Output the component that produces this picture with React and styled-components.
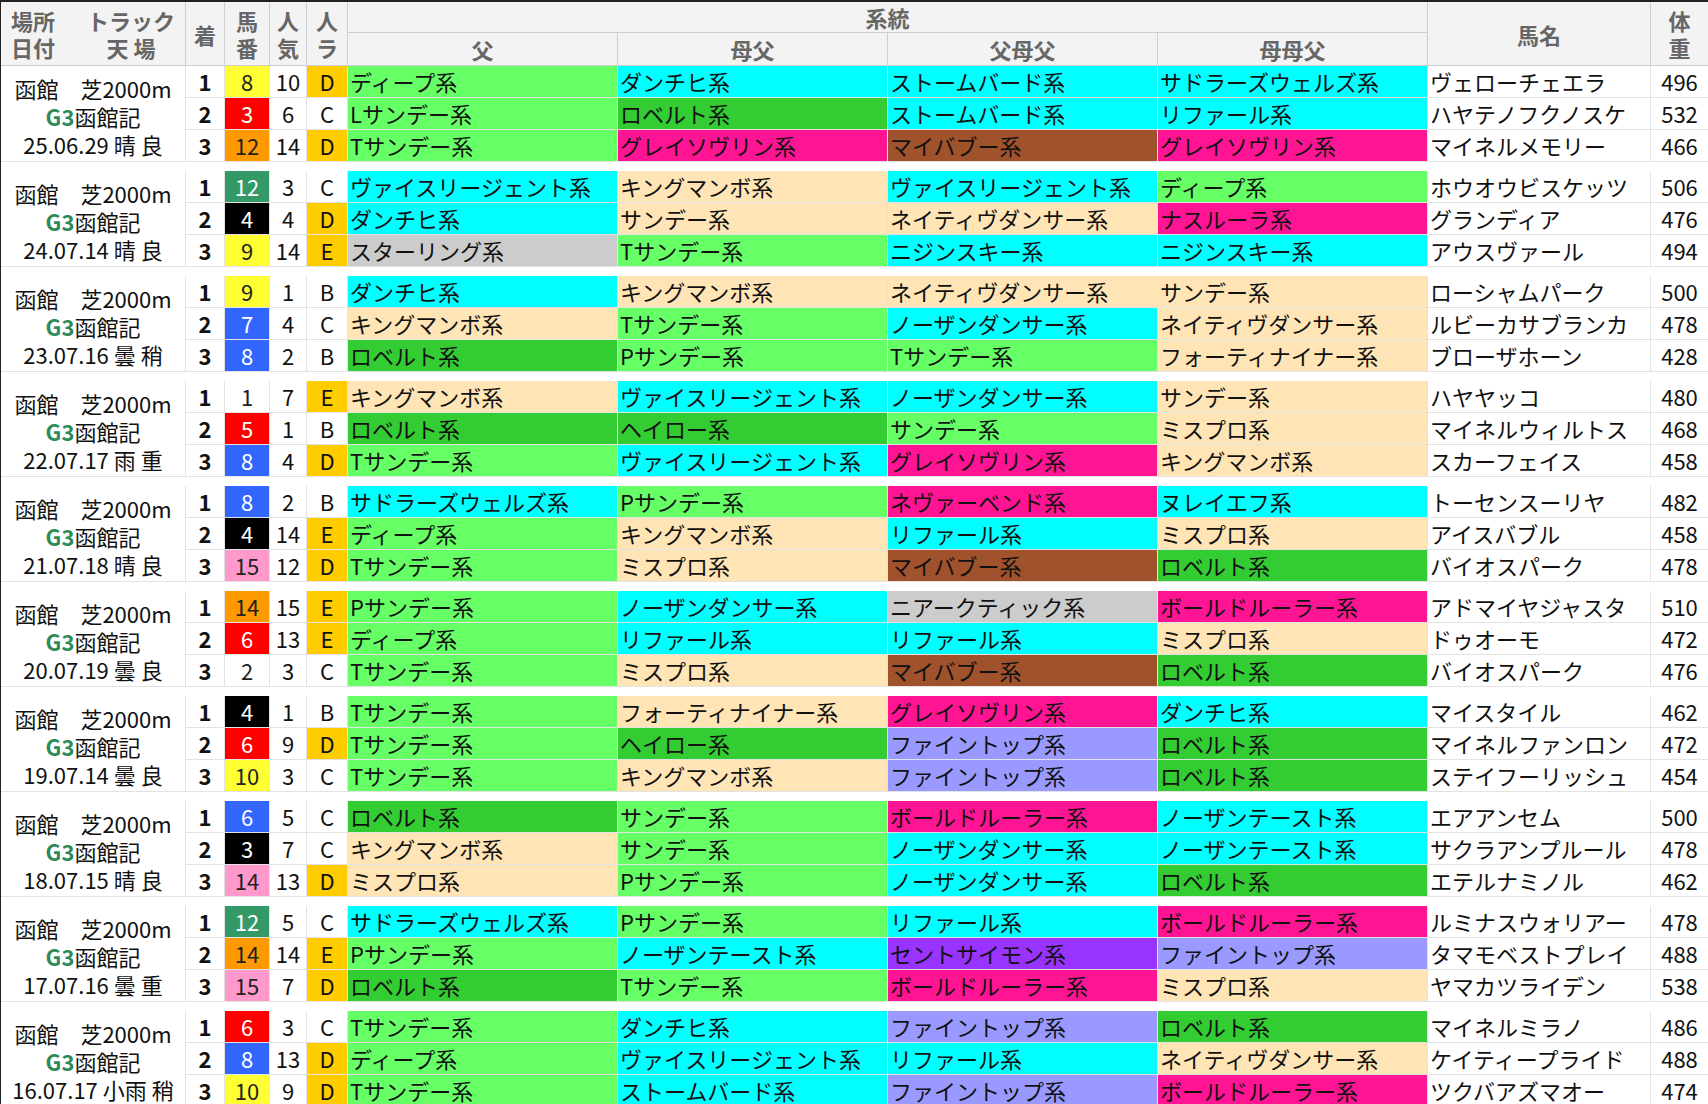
import React from "react";
import styled, { createGlobalStyle } from "styled-components";

const GlobalStyle = createGlobalStyle`
  html, body { margin: 0; padding: 0; background: #fff; overflow: hidden; }
  body { font-family: "Noto Sans CJK JP", "Noto Sans", sans-serif; }
`;

const COLS = "184px 38px 44px 36px 40px 269px 269px 269px 269px 222px 1fr";

const BG = {
  L: "#66ff66",
  C: "#00ffff",
  B: "#ffe4b5",
  DG: "#33cc33",
  P: "#ff1493",
  BR: "#a0522d",
  G: "#cccccc",
  V: "#9999ff",
  PU: "#9933ff",
};

const FRAME = {
  w: ["#ffffff", "#222"],
  k: ["#000000", "#fff"],
  r: ["#ff0000", "#fff"],
  b: ["#3366ff", "#fff"],
  y: ["#ffff33", "#222"],
  g: ["#339966", "#fff"],
  o: ["#ff9900", "#222"],
  p: ["#ff99cc", "#222"],
};

const races = [
  ["25.06.29 晴 良", [
    [1, "8", "y", 10, "D", ["ディープ系", "L"], ["ダンチヒ系", "C"], ["ストームバード系", "C"], ["サドラーズウェルズ系", "C"], "ヴェローチェエラ", 496],
    [2, "3", "r", 6, "C", ["Lサンデー系", "L"], ["ロベルト系", "DG"], ["ストームバード系", "C"], ["リファール系", "C"], "ハヤテノフクノスケ", 532],
    [3, "12", "o", 14, "D", ["Tサンデー系", "L"], ["グレイソヴリン系", "P"], ["マイバブー系", "BR"], ["グレイソヴリン系", "P"], "マイネルメモリー", 466],
  ]],
  ["24.07.14 晴 良", [
    [1, "12", "g", 3, "C", ["ヴァイスリージェント系", "C"], ["キングマンボ系", "B"], ["ヴァイスリージェント系", "C"], ["ディープ系", "L"], "ホウオウビスケッツ", 506],
    [2, "4", "k", 4, "D", ["ダンチヒ系", "C"], ["サンデー系", "B"], ["ネイティヴダンサー系", "B"], ["ナスルーラ系", "P"], "グランディア", 476],
    [3, "9", "y", 14, "E", ["スターリング系", "G"], ["Tサンデー系", "L"], ["ニジンスキー系", "C"], ["ニジンスキー系", "C"], "アウスヴァール", 494],
  ]],
  ["23.07.16 曇 稍", [
    [1, "9", "y", 1, "B", ["ダンチヒ系", "C"], ["キングマンボ系", "B"], ["ネイティヴダンサー系", "B"], ["サンデー系", "B"], "ローシャムパーク", 500],
    [2, "7", "b", 4, "C", ["キングマンボ系", "B"], ["Tサンデー系", "L"], ["ノーザンダンサー系", "C"], ["ネイティヴダンサー系", "B"], "ルビーカサブランカ", 478],
    [3, "8", "b", 2, "B", ["ロベルト系", "DG"], ["Pサンデー系", "L"], ["Tサンデー系", "L"], ["フォーティナイナー系", "B"], "ブローザホーン", 428],
  ]],
  ["22.07.17 雨 重", [
    [1, "1", "w", 7, "E", ["キングマンボ系", "B"], ["ヴァイスリージェント系", "C"], ["ノーザンダンサー系", "C"], ["サンデー系", "B"], "ハヤヤッコ", 480],
    [2, "5", "r", 1, "B", ["ロベルト系", "DG"], ["ヘイロー系", "DG"], ["サンデー系", "L"], ["ミスプロ系", "B"], "マイネルウィルトス", 468],
    [3, "8", "b", 4, "D", ["Tサンデー系", "L"], ["ヴァイスリージェント系", "C"], ["グレイソヴリン系", "P"], ["キングマンボ系", "B"], "スカーフェイス", 458],
  ]],
  ["21.07.18 晴 良", [
    [1, "8", "b", 2, "B", ["サドラーズウェルズ系", "C"], ["Pサンデー系", "L"], ["ネヴァーベンド系", "P"], ["ヌレイエフ系", "C"], "トーセンスーリヤ", 482],
    [2, "4", "k", 14, "E", ["ディープ系", "L"], ["キングマンボ系", "B"], ["リファール系", "C"], ["ミスプロ系", "B"], "アイスバブル", 458],
    [3, "15", "p", 12, "D", ["Tサンデー系", "L"], ["ミスプロ系", "B"], ["マイバブー系", "BR"], ["ロベルト系", "DG"], "バイオスパーク", 478],
  ]],
  ["20.07.19 曇 良", [
    [1, "14", "o", 15, "E", ["Pサンデー系", "L"], ["ノーザンダンサー系", "C"], ["ニアークティック系", "G"], ["ボールドルーラー系", "P"], "アドマイヤジャスタ", 510],
    [2, "6", "r", 13, "E", ["ディープ系", "L"], ["リファール系", "C"], ["リファール系", "C"], ["ミスプロ系", "B"], "ドゥオーモ", 472],
    [3, "2", "w", 3, "C", ["Tサンデー系", "L"], ["ミスプロ系", "B"], ["マイバブー系", "BR"], ["ロベルト系", "DG"], "バイオスパーク", 476],
  ]],
  ["19.07.14 曇 良", [
    [1, "4", "k", 1, "B", ["Tサンデー系", "L"], ["フォーティナイナー系", "B"], ["グレイソヴリン系", "P"], ["ダンチヒ系", "C"], "マイスタイル", 462],
    [2, "6", "r", 9, "D", ["Tサンデー系", "L"], ["ヘイロー系", "DG"], ["ファイントップ系", "V"], ["ロベルト系", "DG"], "マイネルファンロン", 472],
    [3, "10", "y", 3, "C", ["Tサンデー系", "L"], ["キングマンボ系", "B"], ["ファイントップ系", "V"], ["ロベルト系", "DG"], "ステイフーリッシュ", 454],
  ]],
  ["18.07.15 晴 良", [
    [1, "6", "b", 5, "C", ["ロベルト系", "DG"], ["サンデー系", "L"], ["ボールドルーラー系", "P"], ["ノーザンテースト系", "C"], "エアアンセム", 500],
    [2, "3", "k", 7, "C", ["キングマンボ系", "B"], ["サンデー系", "L"], ["ノーザンダンサー系", "C"], ["ノーザンテースト系", "C"], "サクラアンプルール", 478],
    [3, "14", "p", 13, "D", ["ミスプロ系", "B"], ["Pサンデー系", "L"], ["ノーザンダンサー系", "C"], ["ロベルト系", "DG"], "エテルナミノル", 462],
  ]],
  ["17.07.16 曇 重", [
    [1, "12", "g", 5, "C", ["サドラーズウェルズ系", "C"], ["Pサンデー系", "L"], ["リファール系", "C"], ["ボールドルーラー系", "P"], "ルミナスウォリアー", 478],
    [2, "14", "o", 14, "E", ["Pサンデー系", "L"], ["ノーザンテースト系", "C"], ["セントサイモン系", "PU"], ["ファイントップ系", "V"], "タマモベストプレイ", 488],
    [3, "15", "p", 7, "D", ["ロベルト系", "DG"], ["Tサンデー系", "L"], ["ボールドルーラー系", "P"], ["ミスプロ系", "B"], "ヤマカツライデン", 538],
  ]],
  ["16.07.17 小雨 稍", [
    [1, "6", "r", 3, "C", ["Tサンデー系", "L"], ["ダンチヒ系", "C"], ["ファイントップ系", "V"], ["ロベルト系", "DG"], "マイネルミラノ", 486],
    [2, "8", "b", 13, "D", ["ディープ系", "L"], ["ヴァイスリージェント系", "C"], ["リファール系", "C"], ["ネイティヴダンサー系", "B"], "ケイティープライド", 488],
    [3, "10", "y", 9, "D", ["Tサンデー系", "L"], ["ストームバード系", "C"], ["ファイントップ系", "V"], ["ボールドルーラー系", "P"], "ツクバアズマオー", 474],
  ]],
];

const Sheet = styled.div`
  width: 1708px;
  height: 1104px;
  overflow: hidden;
  border-top: 2px solid #222;
  border-left: 1px solid #222;
  box-sizing: border-box;
  font-size: 22px;
  color: #111;
`;

const Header = styled.div`
  display: grid;
  grid-template-columns: ${COLS};
  grid-template-rows: 30px 32px;
  gap: 1px;
  background: #cfcfcf;
  border-bottom: 1px solid #cfcfcf;
`;

const HeadCell = styled.div`
  background: #f3f3f3;
  color: #666;
  font-weight: 700;
  display: flex;
  align-items: center;
  justify-content: center;
  line-height: 26px;
  text-align: center;
  grid-row: ${(p) => p.$row || "auto"};
  grid-column: ${(p) => p.$col || "auto"};
`;

const PlaceHead = styled(HeadCell)`
  display: grid;
  grid-template-columns: auto auto;
  justify-content: space-between;
  align-content: center;
  padding: 0 10px;
  line-height: 27px;
`;

const Stack = styled.div`
  display: flex;
  flex-direction: column;
  line-height: 27px;
`;

const Block = styled.div`
  display: grid;
  grid-template-columns: ${COLS};
  grid-template-rows: repeat(3, 31px);
  gap: 1px;
  background: #e2e2e2;
  border-bottom: 1px solid #e2e2e2;
  margin-bottom: 9px;
`;

const Place = styled.div`
  grid-row: 1 / span 3;
  background: #fff;
  display: flex;
  flex-direction: column;
  justify-content: center;
  align-items: center;
  line-height: 28px;
  padding-top: 4px;
`;

const Grade = styled.span`
  color: #2e8b57;
  font-weight: 700;
`;

const Cell = styled.div`
  background: ${(p) => p.$bg || "#fff"};
  color: ${(p) => p.$fg || "#111"};
  display: flex;
  align-items: center;
  justify-content: ${(p) => (p.$left ? "flex-start" : "center")};
  padding-left: ${(p) => (p.$left ? "2px" : "0")};
  font-weight: ${(p) => (p.$bold ? 700 : 400)};
  white-space: nowrap;
  overflow: hidden;
  line-height: 31px;
`;

function Race({ date, rows }) {
  return (
    <Block>
      <Place>
        <div>函館　芝2000m</div>
        <div><Grade>G3</Grade>函館記</div>
        <div>{date}</div>
      </Place>
      {rows.map((r) => {
        const [fb, ff] = FRAME[r[2]];
        return (
          <React.Fragment key={r[0]}>
            <Cell $bold>{r[0]}</Cell>
            <Cell $bg={fb} $fg={ff}>{r[1]}</Cell>
            <Cell>{r[3]}</Cell>
            <Cell $bg={r[4] === "D" || r[4] === "E" ? "#ffcc00" : "#fff"}>{r[4]}</Cell>
            {[r[5], r[6], r[7], r[8]].map((s, i) => (
              <Cell key={i} $left $bg={BG[s[1]]}>{s[0]}</Cell>
            ))}
            <Cell $left>{r[9]}</Cell>
            <Cell>{r[10]}</Cell>
          </React.Fragment>
        );
      })}
    </Block>
  );
}

export default function App() {
  return (
    <>
      <GlobalStyle />
      <Sheet>
        <Header>
          <PlaceHead $row="1 / span 2">
            <span>場所</span><span>トラック</span>
            <span>日付</span><span>天 場</span>
          </PlaceHead>
          <HeadCell $row="1 / span 2">着</HeadCell>
          <HeadCell $row="1 / span 2"><Stack><span>馬</span><span>番</span></Stack></HeadCell>
          <HeadCell $row="1 / span 2"><Stack><span>人</span><span>気</span></Stack></HeadCell>
          <HeadCell $row="1 / span 2"><Stack><span>人</span><span>ラ</span></Stack></HeadCell>
          <HeadCell $col="6 / span 4">系統</HeadCell>
          <HeadCell $row="1 / span 2" $col="10">馬名</HeadCell>
          <HeadCell $row="1 / span 2" $col="11"><Stack><span>体</span><span>重</span></Stack></HeadCell>
          <HeadCell $row="2" $col="6">父</HeadCell>
          <HeadCell $row="2" $col="7">母父</HeadCell>
          <HeadCell $row="2" $col="8">父母父</HeadCell>
          <HeadCell $row="2" $col="9">母母父</HeadCell>
        </Header>
        {races.map(([date, rows]) => (
          <Race key={date} date={date} rows={rows} />
        ))}
      </Sheet>
    </>
  );
}
